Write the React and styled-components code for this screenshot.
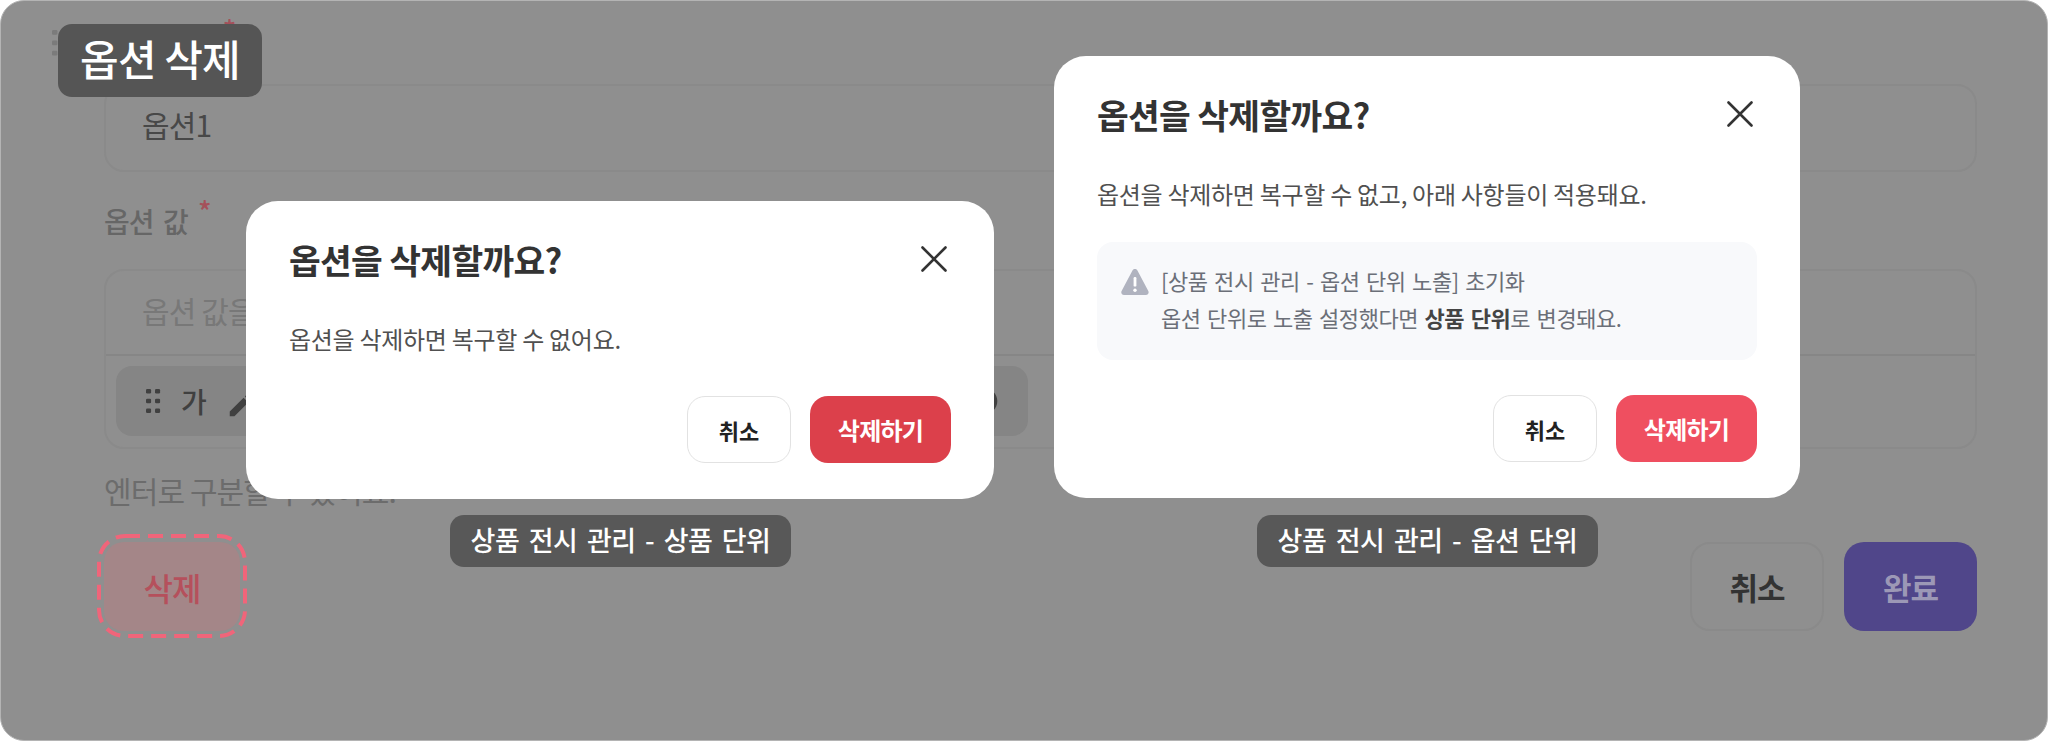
import React from "react";
import styled, { createGlobalStyle } from "styled-components";
import { MdEdit, MdCancel } from "react-icons/md";

const GlobalStyle = createGlobalStyle`
    html, body {
        margin: 0;
        background: #fff;
    }
    * {
        box-sizing: border-box;
    }
    body {
        font-family: "Noto Sans CJK KR", "Noto Sans", sans-serif;
    }
`;

const Grip = ({ size = 16 }) => (
    <svg width={size} height={size * 1.6} viewBox="0 0 10 16" fill="currentColor">
        {[1.5, 8, 14.5].map((y) => (
            <React.Fragment key={y}>
                <rect x="0" y={y - 1.5} width="3.4" height="3" rx="0.8" />
                <rect x="6" y={y - 1.5} width="3.4" height="3" rx="0.8" />
            </React.Fragment>
        ))}
    </svg>
);

const CloseIcon = () => (
    <CloseSvg viewBox="0 0 26 26" fill="none" stroke="currentColor" strokeWidth="2.6" strokeLinecap="round">
        <path d="M1.5 1.5 24.5 24.5M24.5 1.5 1.5 24.5" />
    </CloseSvg>
);

const WarningIcon = () => (
    <svg width="28" height="28" viewBox="0 0 28 28">
        <path
            d="M11.6 2.3c1-1.8 3.7-1.8 4.7 0l11 20.6c1 1.8-.3 4-2.4 4H3c-2.1 0-3.4-2.2-2.4-4z"
            fill="#b0b3bf"
        />
        <rect x="12.6" y="9" width="2.8" height="9.6" rx="1.2" fill="#fff" />
        <circle cx="14" cy="22.2" r="1.7" fill="#fff" />
    </svg>
);

const DashedMark = () => (
    <MarkSvg viewBox="0 0 150 104" fill="none">
        <rect x="2" y="2" width="146" height="100" rx="26" stroke="#f0657a" strokeWidth="4" strokeDasharray="15 8" />
    </MarkSvg>
);

const Dialog = ({ left, top, width, height, danger, children }) => (
    <DialogCard $left={left} $top={top} $width={width} $height={height}>
        <DialogHeader>
            <DialogTitle>옵션을 삭제할까요?</DialogTitle>
            <CloseIcon />
        </DialogHeader>
        {children}
        <DialogFooter>
            <GhostButton>취소</GhostButton>
            <DangerButton $color={danger}>삭제하기</DangerButton>
        </DialogFooter>
    </DialogCard>
);

const App = () => (
    <>
        <GlobalStyle />
        <Frame>
            <FormRow>
                <Handle>
                    <Grip />
                </Handle>
                <FormColumn>
                    <FieldLabel>
                        옵션 이름<Star>*</Star>
                    </FieldLabel>
                    <NameInput>옵션1</NameInput>
                    <ValueLabel>
                        옵션 값<Star>*</Star>
                    </ValueLabel>
                    <ValueBox>
                        <Placeholder>옵션 값을 입력해주세요</Placeholder>
                        <ChipArea>
                            <Chip>
                                <ChipStart>
                                    <Grip size={15} />
                                    <ChipText>가</ChipText>
                                    <PencilIcon size={30} />
                                </ChipStart>
                                <MdCancel size={32} />
                            </Chip>
                        </ChipArea>
                    </ValueBox>
                    <Helper>엔터로 구분할 수 있어요.</Helper>
                    <ActionRow>
                        <DeleteButton>
                            삭제
                            <DashedMark />
                        </DeleteButton>
                        <ActionGroup>
                            <CancelButton>취소</CancelButton>
                            <DoneButton>완료</DoneButton>
                        </ActionGroup>
                    </ActionRow>
                </FormColumn>
            </FormRow>

            <SectionTag>옵션 삭제</SectionTag>

            <Dialog left={246} top={201} width={748} height={298} danger="#dc404b">
                <DialogBody>옵션을 삭제하면 복구할 수 없어요.</DialogBody>
            </Dialog>
            <Caption $center={620}>상품 전시 관리 - 상품 단위</Caption>

            <Dialog left={1054} top={56} width={746} height={442} danger="#ef4f60">
                <DialogBody>옵션을 삭제하면 복구할 수 없고, 아래 사항들이 적용돼요.</DialogBody>
                <Notice>
                    <WarningIcon />
                    <NoticeText>
                        <NoticeLine>[상품 전시 관리 - 옵션 단위 노출] 초기화</NoticeLine>
                        <NoticeLine>
                            옵션 단위로 노출 설정했다면 <NoticeStrong>상품 단위</NoticeStrong>로 변경돼요.
                        </NoticeLine>
                    </NoticeText>
                </Notice>
            </Dialog>
            <Caption $center={1427}>상품 전시 관리 - 옵션 단위</Caption>
        </Frame>
    </>
);

export default App;

const Frame = styled.div`
    position: relative;
    width: 2048px;
    height: 741px;
    overflow: hidden;
    padding: 21px 70px 0 51px;
    background: #8f8f8f;
    border: 1px solid #b4b4b4;
    border-radius: 24px;
`;

const FormRow = styled.div`
    display: flex;
`;

const Handle = styled.div`
    width: 52px;
    padding-top: 8px;
    color: #7b7b7b;
`;

const FormColumn = styled.div`
    flex: 1;
    display: flex;
    flex-direction: column;
    font-size: 30px;
    letter-spacing: -0.03em;
`;

const FieldLabel = styled.div`
    height: 36px;
    line-height: 36px;
    font-size: 28px;
    font-weight: 500;
    word-spacing: 4px;
    color: #666;
`;

const ValueLabel = styled(FieldLabel)`
    margin-top: 31px;
`;

const Star = styled.span`
    position: relative;
    top: -11px;
    margin-left: 10px;
    color: #a5505a;
`;

const NameInput = styled.div`
    margin-top: 26px;
    height: 88px;
    padding-left: 36px;
    line-height: 76px;
    color: #484848;
    border: 2px solid #8a8a8a;
    border-radius: 20px;
`;

const ValueBox = styled.div`
    margin-top: 30px;
    height: 180px;
    border: 2px solid #8a8a8a;
    border-radius: 20px;
`;

const Placeholder = styled.div`
    height: 85px;
    padding-left: 36px;
    line-height: 78px;
    color: #787878;
    border-bottom: 2px solid #868686;
`;

const ChipArea = styled.div`
    padding: 10px 947px 0 10px;
`;

const Chip = styled.div`
    display: flex;
    align-items: center;
    justify-content: space-between;
    height: 70px;
    padding: 0 28px 0 30px;
    color: #404040;
    background: #858585;
    border-radius: 16px;
`;

const ChipStart = styled.div`
    display: flex;
    align-items: center;
    gap: 20px;
`;

const ChipText = styled.span`
    font-size: 28px;
    font-weight: 500;
`;

const PencilIcon = styled(MdEdit)`
    margin-top: 8px;
`;

const Helper = styled.div`
    margin-top: 23px;
    height: 36px;
    line-height: 36px;
    color: #6c6c6c;
`;

const ActionRow = styled.div`
    display: flex;
    justify-content: space-between;
    margin-top: 34px;
`;

const ActionGroup = styled.div`
    display: flex;
    gap: 20px;
`;

const BaseAction = styled.div`
    display: flex;
    align-items: center;
    justify-content: center;
    width: 134px;
    height: 89px;
    font-size: 31px;
    font-weight: 700;
    border-radius: 20px;
`;

const DeleteButton = styled(BaseAction)`
    position: relative;
    width: 136px;
    font-size: 32px;
    font-weight: 500;
    color: #b5505c;
    background: #a48688;
`;

const MarkSvg = styled.svg`
    position: absolute;
    left: -7px;
    top: -8px;
    width: 150px;
    height: 104px;
`;

const CancelButton = styled(BaseAction)`
    color: #333;
    border: 2px solid #8a8a8a;
`;

const DoneButton = styled(BaseAction)`
    width: 133px;
    color: #9c98b6;
    background: #50468a;
`;

const SectionTag = styled.div`
    position: absolute;
    left: 57px;
    top: 23px;
    width: 204px;
    height: 73px;
    text-align: center;
    line-height: 68px;
    font-size: 42px;
    font-weight: 500;
    letter-spacing: -0.02em;
    color: #fff;
    background: #555;
    border-radius: 14px;
`;

const DialogCard = styled.div`
    position: absolute;
    left: ${({ $left }) => $left - 1}px;
    top: ${({ $top }) => $top - 1}px;
    width: ${({ $width }) => $width}px;
    height: ${({ $height }) => $height}px;
    display: flex;
    flex-direction: column;
    padding: 33px 43px 36px;
    background: #fff;
    border-radius: 32px;
`;

const DialogHeader = styled.div`
    display: flex;
    align-items: center;
    justify-content: space-between;
    height: 50px;
`;

const DialogTitle = styled.h2`
    margin: 0;
    font-size: 34.5px;
    font-weight: 700;
    letter-spacing: -0.02em;
    color: #333;
`;

const CloseSvg = styled.svg`
    width: 26px;
    height: 26px;
    margin-right: 4px;
    color: #333;
`;

const DialogBody = styled.p`
    margin: 37px 0 0;
    height: 36px;
    line-height: 36px;
    font-size: 24px;
    letter-spacing: -0.012em;
    color: #505050;
`;

const Notice = styled.div`
    display: flex;
    align-items: flex-start;
    gap: 12px;
    margin-top: 30px;
    height: 118px;
    padding: 26px 24px 0;
    background: #f8f9fb;
    border-radius: 16px;
`;

const NoticeText = styled.div`
    display: flex;
    flex-direction: column;
    gap: 5px;
    margin-top: -4px;
    font-size: 22px;
    letter-spacing: -0.02em;
    word-spacing: 2px;
    color: #6b6f78;
`;

const NoticeLine = styled.div`
    height: 32px;
    line-height: 32px;
`;

const NoticeStrong = styled.strong`
    font-weight: 700;
    color: #444;
`;

const DialogFooter = styled.div`
    display: flex;
    justify-content: flex-end;
    gap: 19px;
    margin-top: auto;
`;

const GhostButton = styled.div`
    display: flex;
    align-items: center;
    justify-content: center;
    width: 104px;
    height: 67px;
    font-size: 22px;
    font-weight: 700;
    color: #222;
    background: #fff;
    border: 1px solid #e2e2e2;
    border-radius: 18px;
`;

const DangerButton = styled.div`
    display: flex;
    align-items: center;
    justify-content: center;
    width: 141px;
    height: 67px;
    font-size: 24px;
    font-weight: 700;
    letter-spacing: -0.03em;
    color: #fff;
    background: ${({ $color }) => $color};
    border-radius: 18px;
`;

const Caption = styled.div`
    position: absolute;
    left: ${({ $center }) => $center - 171}px;
    top: 514px;
    width: 341px;
    height: 52px;
    text-align: center;
    line-height: 50px;
    font-size: 27px;
    font-weight: 500;
    letter-spacing: -0.02em;
    word-spacing: 4px;
    color: #fff;
    background: #585858;
    border-radius: 14px;
`;
